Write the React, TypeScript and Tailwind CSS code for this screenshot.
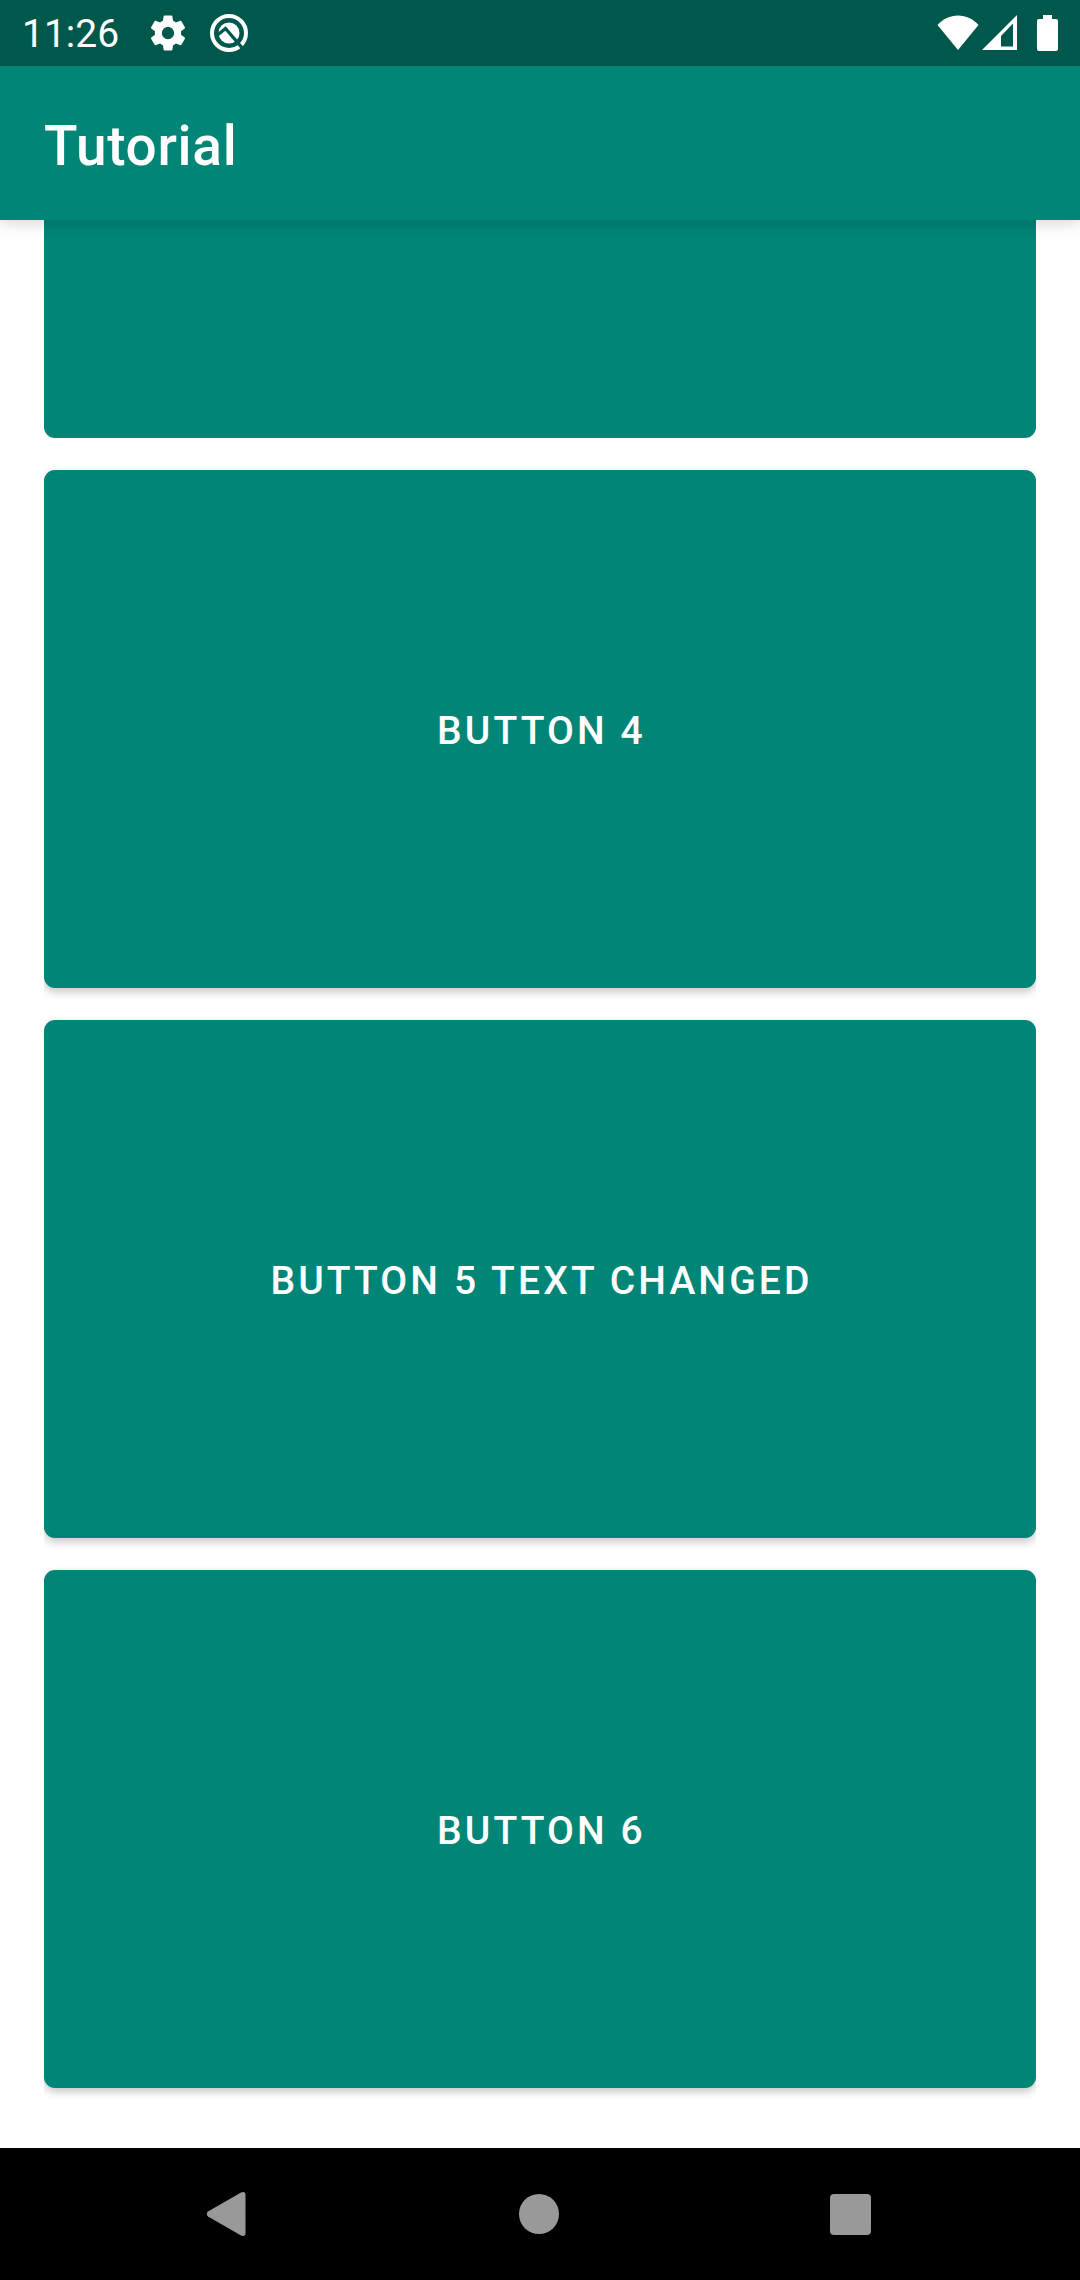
import React from "react";

function GearIcon() {
  return (
    <svg viewBox="0 0 24 24" className="size-[42px]" fill="currentColor" aria-hidden="true">
      <path d="M19.43 12.98c.04-.32.07-.64.07-.98s-.03-.66-.07-.98l2.11-1.65c.19-.15.24-.42.12-.64l-2-3.46c-.12-.22-.39-.3-.61-.22l-2.49 1c-.52-.4-1.08-.73-1.69-.98l-.38-2.65C14.46 2.18 14.25 2 14 2h-4c-.25 0-.46.18-.49.42l-.38 2.65c-.61.25-1.17.59-1.69.98l-2.49-1c-.23-.09-.49 0-.61.22l-2 3.46c-.13.22-.07.49.12.64l2.11 1.65c-.04.32-.07.65-.07.98s.03.66.07.98l-2.11 1.65c-.19.15-.24.42-.12.64l2 3.46c.12.22.39.3.61.22l2.49-1c.52.4 1.08.73 1.69.98l.38 2.65c.03.24.24.42.49.42h4c.25 0 .46-.18.49-.42l.38-2.65c.61-.25 1.17-.59 1.69-.98l2.49 1c.23.09.49 0 .61-.22l2-3.46c.12-.22.07-.49-.12-.64l-2.11-1.65zM12 15.5c-1.93 0-3.5-1.57-3.5-3.5s1.57-3.5 3.500-3.5 3.500 1.570 3.500 3.500-1.570 3.500-3.500 3.500z" />
    </svg>
  );
}

function CircleBadgeIcon() {
  return (
    <svg viewBox="0 0 42 42" className="size-[42px]" fill="none" aria-hidden="true">
      <circle cx="21" cy="21" r="17" stroke="currentColor" strokeWidth="4" />
      <circle cx="21" cy="21" r="10.5" fill="currentColor" />
      <path d="M9.500 23L17.500 16.500L36 38" stroke="#00574b" strokeWidth="3.400" />
    </svg>
  );
}

function WifiIcon() {
  return (
    <svg viewBox="0 0 42 36" className="h-9 w-[42px]" fill="currentColor" aria-hidden="true">
      <path d="M21 35L.5 10C6 4 13 .5 21 .5S36 4 41.500 10z" />
    </svg>
  );
}

function SignalIcon() {
  return (
    <svg viewBox="0 0 35 36" className="h-9 w-[35px]" fill="currentColor" fillRule="evenodd" aria-hidden="true">
      <path d="M0 35H35V0zM19 31.500V21L31 8.500V31.500z" />
    </svg>
  );
}

function BatteryIcon() {
  return (
    <svg viewBox="0 0 21 36" className="h-9 w-[21px]" fill="currentColor" aria-hidden="true">
      <path d="M6 0h9v4h4a2 2 0 0 1 2 2v28a2 2 0 0 1-2 2H2a2 2 0 0 1-2-2V6a2 2 0 0 1 2-2h4z" />
    </svg>
  );
}

function StatusBar() {
  return (
    <div className="relative z-20 flex h-[66px] shrink-0 items-center justify-between bg-[#00574b] px-[22px] text-white">
      <div className="flex items-center">
        <span className="pt-[3px] text-[39px] leading-none">11:26</span>
        <div className="ml-7 flex items-center gap-[19px]">
          <GearIcon />
          <CircleBadgeIcon />
        </div>
      </div>
      <div className="flex items-center">
        <WifiIcon />
        <span className="ml-[3px] flex">
          <SignalIcon />
        </span>
        <span className="ml-5 flex">
          <BatteryIcon />
        </span>
      </div>
    </div>
  );
}

const buttons = ["Button 4", "Button 5 text changed", "Button 6"];

export default function App() {
  return (
    <div className="flex h-screen flex-col overflow-hidden bg-white font-['Roboto',sans-serif]">
      <StatusBar />
      <header className="z-10 flex h-[154px] shrink-0 items-center bg-[#008577] px-11 pt-1.5 shadow-[0_4px_14px_rgba(0,0,0,0.15)]">
        <h1 className="text-[55px] leading-none font-medium tracking-[0.0125em] text-white">Tutorial</h1>
      </header>
      <main className="mx-11 flex min-h-0 flex-1 flex-col justify-end gap-8 overflow-hidden pb-[60px]">
        <button
          type="button"
          aria-label="Button 3"
          className="h-[518px] w-full shrink-0 rounded-[11px] bg-[#008577]"
        />
        {buttons.map((label) => (
          <button
            key={label}
            type="button"
            className="h-[518px] w-full shrink-0 rounded-[11px] bg-[#008577] pt-1 pl-[3px] text-[39px] font-medium tracking-[0.08em] text-white uppercase shadow-[0_4px_8px_rgba(0,0,0,0.22)]"
          >
            {label}
          </button>
        ))}
      </main>
      <nav className="flex h-[132px] shrink-0 items-center justify-between bg-black pr-[209px] pl-[206px] text-[#999999]">
        <button type="button" aria-label="Back">
          <svg viewBox="0 0 42 46" className="h-[46px] w-[42px]" fill="currentColor" aria-hidden="true">
            <path d="M2 20.500L35 1.400Q39.500 0 39.500 4V42Q39.500 46 35 44.600L2 25.500Q-.5 23 2 20.500z" />
          </svg>
        </button>
        <button type="button" aria-label="Home" className="size-10 rounded-full bg-[#999999]" />
        <button type="button" aria-label="Recent apps" className="size-[41px] rounded-[4px] bg-[#999999]" />
      </nav>
    </div>
  );
}
